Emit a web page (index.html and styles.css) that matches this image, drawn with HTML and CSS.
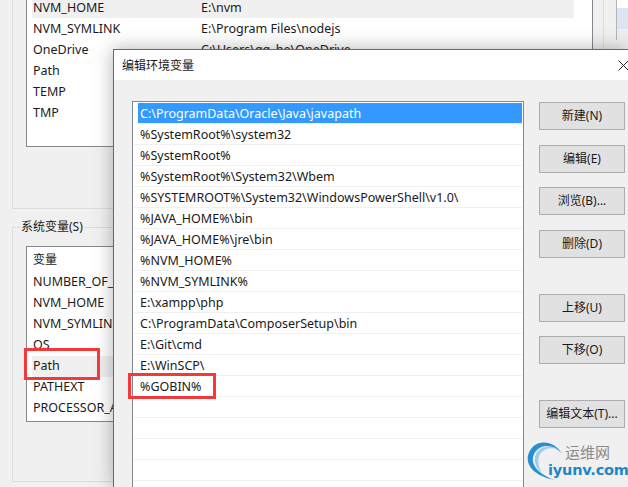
FILE: index.html
```html
<!DOCTYPE html>
<html lang="zh-CN">
<head>
  <meta charset="UTF-8" />
  <title>编辑环境变量</title>
  <link rel="stylesheet" href="styles.css">
</head>
<body>
  <div class="parent">
    <div class="main-col">
      <div class="list user-list">
        <div class="vrow active"><span class="vname">NVM_HOME</span><span>E:\nvm</span></div>
        <div class="vrow"><span class="vname">NVM_SYMLINK</span><span>E:\Program Files\nodejs</span></div>
        <div class="vrow"><span class="vname">OneDrive</span><span>C:\Users\qq_he\OneDrive</span></div>
        <div class="vrow"><span class="vname">Path</span></div>
        <div class="vrow"><span class="vname">TEMP</span></div>
        <div class="vrow"><span class="vname">TMP</span></div>
      </div>
    </div>
    <div class="sys-group">
      <div class="sys-label">系统变量(S)</div>
      <div class="list sys-list">
        <div class="vrow head">变量</div>
        <div class="vrow">NUMBER_OF_PROCESSORS</div>
        <div class="vrow">NVM_HOME</div>
        <div class="vrow">NVM_SYMLINK</div>
        <div class="vrow">OS</div>
        <div class="vrow active">Path</div>
        <div class="vrow">PATHEXT</div>
        <div class="vrow">PROCESSOR_ARCHITECTURE</div>
      </div>
    </div>
    <div class="side-strip"></div>
  </div>

  <div class="dialog">
    <div class="titlebar">
      <span>编辑环境变量</span>
      <svg class="close" width="11" height="11" viewBox="0 0 11 11"><path d="M0.5 0.5L10.5 10.5M10.5 0.5L0.5 10.5" stroke="#222" fill="none"/></svg>
    </div>
    <div class="dialog-body">
      <div class="path-list">
        <div class="prow selected">C:\ProgramData\Oracle\Java\javapath</div>
        <div class="prow">%SystemRoot%\system32</div>
        <div class="prow">%SystemRoot%</div>
        <div class="prow">%SystemRoot%\System32\Wbem</div>
        <div class="prow">%SYSTEMROOT%\System32\WindowsPowerShell\v1.0\</div>
        <div class="prow">%JAVA_HOME%\bin</div>
        <div class="prow">%JAVA_HOME%\jre\bin</div>
        <div class="prow">%NVM_HOME%</div>
        <div class="prow">%NVM_SYMLINK%</div>
        <div class="prow">E:\xampp\php</div>
        <div class="prow">C:\ProgramData\ComposerSetup\bin</div>
        <div class="prow">E:\Git\cmd</div>
        <div class="prow">E:\WinSCP\</div>
        <div class="prow">%GOBIN%</div>
        <div class="prow"></div>
        <div class="prow"></div>
        <div class="prow"></div>
        <div class="prow"></div>
      </div>
      <div class="buttons">
        <button>新建(N)</button>
        <button>编辑(E)</button>
        <button>浏览(B)...</button>
        <button>删除(D)</button>
        <button class="gap-top">上移(U)</button>
        <button>下移(O)</button>
        <button class="gap-top">编辑文本(T)...</button>
      </div>
    </div>
  </div>

  <div class="mark mark-path"></div>
  <div class="mark mark-gobin"></div>

  <div class="watermark">
    <svg width="44" height="44" viewBox="0 0 44 44">
      <path d="M37 15C31 3 14 -1 6 10C-2 21 4 36 30 41C15 36 4 26 9 15C15 4 29 5 37 15Z" fill="#2a8fd0"/>
      <path d="M34 11C26 5 15 7 11 15C8 22 11 29 17 34C13 27 12 21 15 15C19 9 27 8 34 11Z" fill="#9ccdec"/>
    </svg>
    <div class="wm-cn">运维网</div>
    <div class="wm-en">iyunv.com</div>
  </div>
</body>
</html>
```

FILE: styles.css
```css
* {
  box-sizing: border-box;
}

html, body {
  margin: 0;
  height: 487px;
  overflow: hidden;
}

body {
  position: relative;
  width: 628px;
  background: #f0f0f0;
  color: #1a1a1a;
  font-family: "Noto Sans", "Noto Sans CJK SC", sans-serif;
  font-size: 12.5px;
}

/* parent window behind the dialog */
.parent {
  height: 487px;
  padding-left: 12px;
  display: flex;
  flex-direction: column;
}

.main-col {
  width: 592px;
  height: 209px;
  padding: 0 12px 0 13px;
  border: 1px solid #dcdcdc;
  border-top: none;
}

.list {
  background: #fff;
  border: 1px solid #828790;
}

.user-list {
  width: 567px;
  height: 147px;
  border-top: none;
  padding: 0 18px 0 5px;
}

.vrow {
  height: 21px;
  line-height: 20px;
  padding-left: 1px;
  white-space: nowrap;
}

.user-list .vrow {
  display: flex;
  line-height: 22px;
}

.user-list .vrow:first-child {
  height: 18px;
  line-height: 15px;
}

.vname {
  width: 168px;
}

.active {
  background: #f0f0f0;
}

.sys-group {
  position: relative;
  margin-top: 18px;
  width: 592px;
  height: 255px;
  padding: 18px 12px 0 13px;
  border: 1px solid #dcdcdc;
}

.sys-label {
  position: absolute;
  top: -10px;
  left: 7px;
  padding: 0 1px;
  background: #f0f0f0;
  line-height: 18px;
  font-size: 12px;
}

.sys-list {
  height: 176px;
  width: 567px;
  padding: 3px 18px 0 5px;
  overflow: hidden;
}

.sys-list .head {
  height: 22px;
  font-size: 12px;
}

.side-strip {
  position: absolute;
  top: 0;
  left: 616px;
  width: 12px;
  height: 40px;
  border-left: 1px solid #b4b4b4;
  background: linear-gradient(#fff 8px, #dbe4ef 8px, #dbe4ef 29px, #eee 29px);
}

/* dialog window, runs off the right and bottom of the shot */
.dialog {
  position: absolute;
  top: 49px;
  left: 113px;
  width: 515px;
  height: 438px;
  background: #f0f0f0;
  border: 1px solid #2b7ab8;
  border-width: 1px 0 0 1px;
  box-shadow: 0 0 18px rgba(0, 0, 0, 0.3);
}

.titlebar {
  height: 30px;
  background: #fff;
  display: flex;
  align-items: center;
  justify-content: space-between;
  padding: 0 0 0 8px;
  font-size: 12px;
}

.close {
  margin-right: -1px;
}

.dialog-body {
  display: flex;
  padding: 21px 0 0 18px;
}

.path-list {
  width: 392px;
  height: 386px;
  background: #fff;
  border: 1px solid #828790;
  border-bottom: none;
  padding: 1px 1px 0 1px;
  overflow: hidden;
}

.prow {
  height: 21px;
  line-height: 22px;
  padding-left: 6px;
  border-bottom: 1px solid #f0f0f0;
  white-space: nowrap;
}

.prow.selected {
  margin-left: 4px;
  padding-left: 2px;
  background: #3399ff;
  color: #fff;
}

.buttons {
  display: flex;
  flex-direction: column;
  gap: 14.6px;
  margin-left: 15px;
  padding-top: 1px;
}

button {
  width: 86px;
  height: 28px;
  padding: 0 0 2px;
  background: #e1e1e1;
  border: 1px solid #adadad;
  color: #1a1a1a;
  font: inherit;
  font-size: 12px;
}

.gap-top {
  margin-top: 21.4px;
}

/* red annotation boxes */
.mark {
  position: absolute;
  border: 3px solid #f33a3a;
}

.mark-path {
  left: 24px;
  top: 348px;
  width: 76px;
  height: 32px;
}

.mark-gobin {
  left: 128px;
  top: 373px;
  width: 88px;
  height: 26px;
}

.watermark {
  position: absolute;
  left: 524px;
  top: 439px;
  width: 104px;
  height: 48px;
}

.watermark svg {
  position: absolute;
  left: 1px;
  top: 0;
}

.wm-cn {
  position: absolute;
  left: 41px;
  top: 3px;
  font-size: 15px;
  line-height: 20px;
  color: #8a8a8a;
}

.wm-en {
  position: absolute;
  left: 24px;
  top: 22px;
  font-size: 14.5px;
  line-height: 18px;
  font-weight: 700;
  color: #1e86c8;
  font-family: "DejaVu Sans", sans-serif;
  letter-spacing: -0.2px;
}
```
